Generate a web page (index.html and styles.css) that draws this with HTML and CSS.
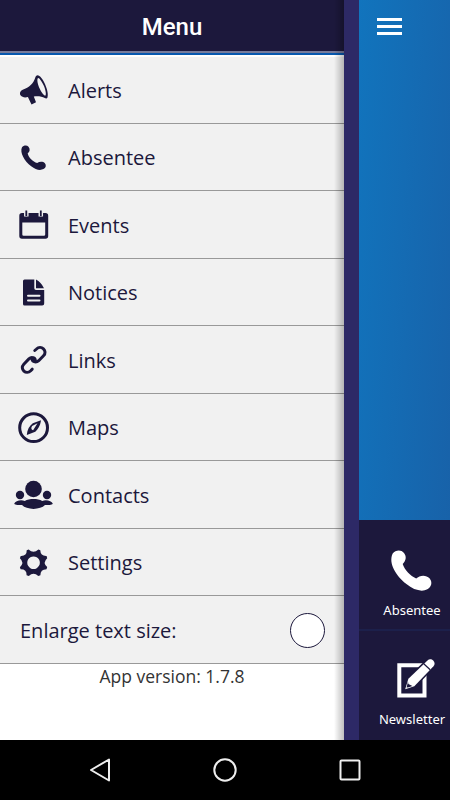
FILE: index.html
```html
<!DOCTYPE html>
<html lang="en">
<head>
    <meta charset="UTF-8">
    <meta name="viewport" content="width=device-width, initial-scale=1.0">
    <title>Menu</title>
    <link rel="stylesheet" href="styles.css">
</head>
<body>
    <div class="app">
        <nav class="menu">
            <h1>Menu</h1>
            <ul class="menu-list">
                <li>
                    <svg class="icon" viewBox="0 0 40 40">
                        <path d="M23.500 5.300c4.800 0 12.200 16.700 10 22.200-.4 1-1.500 1.200-2.700.5-3-1.600-7.300-2-11-1.400l2.200 5.700-4.500 2.100-3.600-7.300c-3 .6-5.900.3-7.200-1.500-1.500-2.300-.4-4.900 2-5.900 6.500-2.300 10.800-6.300 12.500-12 .4-1.300 1.300-2.200 2.300-2.400z"/>
                        <path class="hole" d="M24 8c-1.500 1.200-.2 6.800 1.900 11.100 2 4.200 4.500 7 5.500 6.500 1.100-.9.200-6.200-1.800-10.400S25.100 7.500 24 8z"/>
                    </svg>
                    <span>Alerts</span>
                </li>
                <li>
                    <svg class="icon" viewBox="0 0 40 40">
                        <path d="M8 9.300c1.600-2.200 4.900-2.400 6.500-.6 1.800 2 1.500 4.900-.8 6.600.8 4.500 5.200 8.500 9.500 9.700 2.300-1.700 5.800-1.800 7.700.2 1.600 1.900 1.100 4.600-1.400 5.900-3.300 1.700-7.900.7-12.300-2.800C10.500 23.500 5.500 14.300 8 9.300z"/>
                    </svg>
                    <span>Absentee</span>
                </li>
                <li>
                    <svg class="icon" viewBox="0 0 40 40">
                        <path fill-rule="evenodd" d="M8 8h23.500a2.700 2.700 0 0 1 2.700 2.700V31a2.700 2.700 0 0 1-2.700 2.700H8A2.700 2.700 0 0 1 5.300 31V10.700A2.700 2.700 0 0 1 8 8zm.3 9.500v12q0 1.300 1.300 1.300h20.300q1.300 0 1.300-1.300v-12z"/>
                        <path class="gap" d="M12.300 4v7.500M26.800 4v7.500"/>
                        <path class="peg" d="M12.300 5.500V11M26.800 5.500V11"/>
                    </svg>
                    <span>Events</span>
                </li>
                <li>
                    <svg class="icon" viewBox="0 0 40 40">
                        <path d="M10.500 6.500h9.800v8.800q0 1.700 1.700 1.700h8.200v13.500q0 2-2 2H10.500q-1.500 0-1.500-1.500V8q0-1.500 1.500-1.500zM22 6.500q5 2.500 8 8.800h-8z"/>
                        <path class="lines" d="M14 22.700h11.500M14 27.500h11.500"/>
                    </svg>
                    <span>Notices</span>
                </li>
                <li>
                    <svg class="icon" viewBox="0 0 40 40">
                        <path class="stroke" d="M18 17.500c-.6 4.500 4 5.600 6.700 3.200l4.800-4.900c4.700-4.900-2.500-11.300-7-6.800l-1.700 1.500M21.200 21.500c.7-4-3.600-5.200-6.300-2.600l-5.100 5.300c-4.600 5 2.500 11 6.900 6.600l1.500-1.600"/>
                    </svg>
                    <span>Links</span>
                </li>
                <li>
                    <svg class="icon" viewBox="0 0 40 40">
                        <circle class="ring" cx="19.600" cy="19.700" r="13.900"/>
                        <path fill-rule="evenodd" d="M27 12.300c-.8 6-3.200 8.900-5.700 11.500l-8.500 3.300c.4-5.500 2.600-9.300 6-11.800zm-3.500 3-5.400 2.700c-1.400 2-.8 3.700 1 4.300z"/>
                    </svg>
                    <span>Maps</span>
                </li>
                <li>
                    <svg class="icon" viewBox="0 0 40 40">
                        <circle cx="19.500" cy="14" r="8.300"/>
                        <circle cx="6" cy="20" r="4.200"/>
                        <circle cx="33" cy="20" r="4.200"/>
                        <path d="M.3 28.600c1-2.700 6.200-4.200 10.500-2.700 4.500-2.600 13-2.600 17.400 0 4.300-1.500 9.500 0 10.500 2.700.2 1-2.500 1.500-7.700 1.500-4.500 5.100-18.500 5.100-23 0-5.200 0-7.900-.5-7.700-1.500z"/>
                    </svg>
                    <span>Contacts</span>
                </li>
                <li>
                    <svg class="icon" viewBox="0 0 40 40">
                        <path fill-rule="evenodd" d="M14.600 6.400Q19.500 11 24.400 6.400L26.300 7.200Q26.500 13.200 32.600 12.900L33.200 15.200Q28.200 19.600 33.200 24.100L32.500 26.200Q26.300 26.200 26.400 32.200L24.300 33Q19.500 28.500 14.800 33L12.600 32.200Q12.800 26.200 6.600 26.300L5.900 24.200Q10.800 19.500 5.900 15.200L6.700 12.900Q12.900 13.200 12.700 7.200zM19.500 13.400a6.300 6.300 0 1 0 .1 0z"/>
                    </svg>
                    <span>Settings</span>
                </li>
                <li class="text-size">
                    <span>Enlarge text size:</span>
                    <div class="toggle"></div>
                </li>
            </ul>
            <p class="version">App version: 1.7.8</p>
        </nav>

        <main class="page">
            <div class="banner">
                <div class="burger"><i></i><i></i><i></i></div>
            </div>
            <div class="tile">
                <svg viewBox="0 0 48 48">
                    <path d="M4.700 6.500c2.700-3.800 8.600-4.200 11.300-.6 2.900 3.700 1.900 7.700-1.300 11.200 2 6.200 7.500 11.700 13.500 14.500 3.500-3.700 10.100-3.900 13.300-.3 3 3.600 2.400 8.400-2.200 11-5.200 2.900-13.600 1-20.900-5.200C8 29 0 16 4.700 6.500z"/>
                </svg>
                <span>Absentee</span>
            </div>
            <div class="tile tile-news">
                <svg viewBox="0 0 48 48">
                    <path class="frame" d="M11.300 8.200H36.500V38.500H11.300z"/>
                    <path class="pencil" d="M17.200 32.300l3.200-10.500L39.500 3.400c3.800-3.400 9.400 2 6 5.900L26.300 29.300z"/>
                    <path class="cut" d="M35.700 6.800l6.500 6"/>
                    <path class="lead" d="M20 24.700l.4 2.200 4 2-3.500 1.300-2.300.2z"/>
                </svg>
                <span>Newsletter</span>
            </div>
        </main>
    </div>

    <footer class="navbar">
        <svg viewBox="0 0 26 26"><path d="M22 2.500v21L4 13z"/></svg>
        <svg viewBox="0 0 26 26"><circle cx="13" cy="13" r="10.700"/></svg>
        <svg viewBox="0 0 26 26"><rect x="3.500" y="3.500" width="19" height="19" rx="1"/></svg>
    </footer>
</body>
</html>
```
FILE: styles.css
```css
* {
    box-sizing: border-box;
}

body {
    margin: 0;
    height: 800px;
    overflow: hidden;
    font-family: "Open Sans", sans-serif;
    color: #1c183c;
    background: #000;
}

.app {
    display: flex;
    height: 740px;
}

/* Slide out menu */
.menu {
    position: relative; /* For the edge shadow */
    flex: none;
    width: 344px;
    background: #fff;
}

.menu::after {
    content: "";
    position: absolute;
    top: 0;
    right: 0;
    bottom: 0;
    width: 10px;
    background: linear-gradient(to right, rgba(0, 0, 0, 0), rgba(0, 0, 0, 0.25));
}

h1 {
    height: 51px;
    margin: 0;
    line-height: 54px;
    font-family: Roboto, sans-serif;
    font-size: 24px;
    font-weight: 500;
    text-align: center;
    color: #fff;
    background: #1c183c;
}

.menu-list {
    margin: 0;
    padding: 0;
    list-style: none;
    border-top: 2px solid #777b9b;
    box-shadow: inset 0 2px #0758ae, inset 0 4px #fff;
    padding-top: 3px;
    background: #f1f1f1;
}

.menu-list li {
    display: flex;
    align-items: center;
    height: 67.5px;
    padding-top: 2px;
    padding-left: 14px;
    font-size: 20px;
    border-bottom: 1px solid #999;
}

.icon {
    width: 40px;
    height: 40px;
    margin-right: 14px;
    fill: #1c183c;
}

.icon .hole {
    fill: #f1f1f1;
}

.icon .gap,
.icon .peg,
.icon .lines,
.icon .stroke,
.icon .ring {
    fill: none;
    stroke: #1c183c;
    stroke-width: 3;
}

.icon .gap {
    stroke: #f1f1f1;
    stroke-width: 4.5;
}

.icon .peg {
    stroke-width: 1.8;
}

.icon .lines {
    stroke: #f1f1f1;
    stroke-width: 2;
    stroke-linecap: round;
}

.icon .stroke {
    stroke-linecap: round;
}

.menu-list .text-size {
    justify-content: space-between;
    padding: 2px 19px 0 20px;
}

.toggle {
    width: 35px;
    height: 35px;
    border: 1px solid #1c183c;
    border-radius: 50%;
    background: #fff;
}

.version {
    margin: 0;
    font-size: 17.5px;
    line-height: 24px;
    text-align: center;
    color: #333;
}

/* Page pushed to the right */
.page {
    flex: 1;
    min-width: 0;
    overflow: hidden;
    border-left: 15px solid #2d2966;
    background: #1c183c;
}

.banner {
    height: 520px;
    padding: 18px 0 0 18px;
    background: linear-gradient(94deg, #1174bd, #1862a9);
}

.burger i {
    display: block;
    width: 25px;
    height: 3px;
    margin-bottom: 4px;
    background: #fff;
}

.tile {
    display: flex;
    flex-direction: column;
    align-items: center;
    width: 106px;
    height: 111px;
    padding-top: 27px;
    font-family: "Noto Sans", sans-serif;
    font-size: 13px;
    color: #fff;
    border-bottom: 2px solid #1c204b;
}

.tile svg {
    width: 48px;
    height: 48px;
    fill: #fff;
}

.tile span {
    margin-top: 6px;
}

.tile-news {
    height: 109px;
    padding-top: 26px;
    border: 0;
}

.tile-news span {
    margin-top: 5px;
}

.tile .frame {
    fill: none;
    stroke: #fff;
    stroke-width: 4;
}

.tile .pencil {
    stroke: #1c183c;
    stroke-width: 3;
    paint-order: stroke;
}

.tile .cut {
    stroke: #1c183c;
    stroke-width: 1.2;
}

.tile .lead {
    fill: #1c183c;
}

/* Android buttons */
.navbar {
    display: flex;
    justify-content: space-between;
    align-items: center;
    height: 60px;
    padding: 0 87px;
    background: #000;
}

.navbar svg {
    width: 26px;
    height: 26px;
    fill: none;
    stroke: #eee;
    stroke-width: 2;
    stroke-linejoin: round;
}
```
